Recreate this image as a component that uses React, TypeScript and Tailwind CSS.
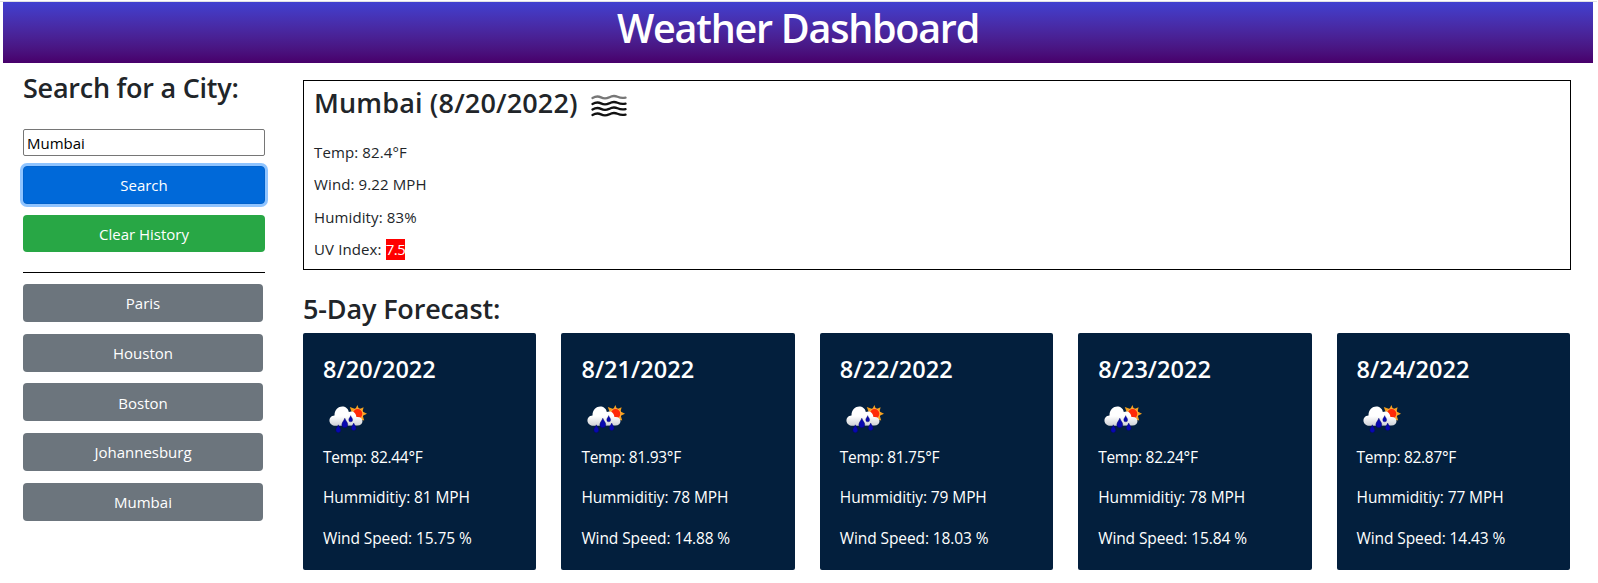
import React from "react";

const history = ["Paris", "Houston", "Boston", "Johannesburg", "Mumbai"];

const forecast = [
  { date: "8/20/2022", temp: "82.44", humidity: "81", wind: "15.75" },
  { date: "8/21/2022", temp: "81.93", humidity: "78", wind: "14.88" },
  { date: "8/22/2022", temp: "81.75", humidity: "79", wind: "18.03" },
  { date: "8/23/2022", temp: "82.24", humidity: "78", wind: "15.84" },
  { date: "8/24/2022", temp: "82.87", humidity: "77", wind: "14.43" },
];

function MistIcon() {
  const wave = "q4.5 -2.6 8.5 -0.6 t8 0 q4.5 -2.4 8.5 -0.6 t8 0.8";
  return (
    <svg className="ml-[13px] mt-[13px] h-[24px] w-[36px] shrink-0" viewBox="0 0 36 24" fill="none" strokeWidth="2.3" strokeLinecap="round">
      <path d={"M1.5 4" + wave} stroke="#777" />
      <path d={"M1.5 10" + wave} stroke="#111" />
      <path d={"M1.5 15.5" + wave} stroke="#111" />
      <path d={"M1.5 21" + wave} stroke="#111" />
    </svg>
  );
}

function Drop({ x, y, s }: { x: number; y: number; s: number }) {
  return (
    <path
      transform={`translate(${x} ${y}) scale(${s})`}
      d="M0 0 C0.8 2.6 3 4 3 6.6 A3 3 0 0 1 -3 6.6 C-3 4 -0.8 2.6 0 0 Z"
      fill="#0808b0"
      stroke="#050568"
      strokeWidth="0.5"
    />
  );
}

function RainIcon({ id }: { id: string }) {
  return (
    <svg className="block h-[50px] w-[50px]" viewBox="0 0 50 50">
      <defs>
        <linearGradient id={id} x1="0" y1="0" x2="0" y2="1">
          <stop offset="0.5" stopColor="#ffffff" />
          <stop offset="1" stopColor="#cfd1d6" />
        </linearGradient>
      </defs>
      <path
        d="M34.4 9 L36 13.2 L40.6 11.2 L39.6 15.4 L44 17.8 L39.8 19.7 L41.2 24.6 L36.5 23.5 L34.4 26 L30 23 L26 20 L29 17 L26.8 11 L32.4 13 Z"
        fill="#f5a01c"
      />
      <circle cx="34.6" cy="17.8" r="5.3" fill="#ff2a08" stroke="#ffab3a" strokeWidth="1.1" />
      <path
        d="M13.5 29.8 C4.5 30.3 4.6 19.6 11.5 19.5 C11.5 8.5 24.5 8 25.8 16 C29.5 14.4 33 16.5 33.4 21 C41.5 20 41.2 29.6 34.5 29.6 Z"
        fill={`url(#${id})`}
      />
      <Drop x={27.7} y={19.6} s={0.65} />
      <Drop x={21.8} y={22.3} s={0.98} />
      <Drop x={15.3} y={28.8} s={0.82} />
      <Drop x={30.7} y={27} s={0.78} />
    </svg>
  );
}

export default function App() {
  return (
    <div className="h-[583px] w-full overflow-hidden bg-white pt-px font-['Open_Sans','Noto_Sans',sans-serif] text-[15px] text-[#212529]">
      <div className="mr-[1px] h-px bg-[#dfe0e4]" />
      <header className="ml-[3px] mr-[5px] h-[61px] bg-linear-to-b from-[#4040d0] to-[#48006b] text-center text-white">
        <h1 className="text-[39.5px] font-semibold leading-[52px] tracking-[-1.25px]">Weather Dashboard</h1>
      </header>

      <div className="flex items-start pl-[23px] pr-[27px]">
        <aside className="w-[242px] shrink-0 pt-[8px]">
          <h3 className="text-[27px] font-semibold leading-[34px] tracking-[-0.25px]">Search for a City:</h3>
          <input
            className="mt-[24px] block h-[27px] w-full rounded-[2px] border border-[#767676] px-[3px] text-black outline-none"
            defaultValue="Mumbai"
          />
          <button className="mt-[10px] block h-[38px] w-full rounded-[4px] border border-[#0062cc] bg-[#0069d9] text-white shadow-[0_0_0_3px_#8fc4ff]">
            Search
          </button>
          <button className="mt-[11px] block h-[37px] w-full rounded-[4px] bg-[#28a745] pt-px text-white">Clear History</button>
          <hr className="mt-[20px] border-t border-black" />
          <div className="mt-[11px] flex w-[240px] flex-col gap-[11.7px]">
            {history.map((city) => (
              <button key={city} className="h-[38px] rounded-[4px] bg-[#6c757d] pt-px text-white">
                {city}
              </button>
            ))}
          </div>
        </aside>

        <main className="ml-[38px] min-w-0 flex-1 pt-[17px]">
          <section className="h-[190px] border border-black pl-[10px]">
            <div className="flex h-[45px] items-start">
              <h2 className="text-[27px] font-semibold leading-[44px] tracking-[0.15px]">Mumbai (8/20/2022)</h2>
              <MistIcon />
            </div>
            <div className="mt-[10px] flex flex-col leading-[32.3px] tracking-[0.12px] text-[#212529]">
              <p>Temp: 82.4°F</p>
              <p>Wind: 9.22 MPH</p>
              <p>Humidity: 83%</p>
              <p className="flex items-start whitespace-pre">
                UV Index: <span className="mt-[6px] h-[21px] bg-[#ff0000] leading-[21px] tracking-[-0.5px] text-white">7.5</span>
              </p>
            </div>
          </section>

          <h3 className="mt-[22px] text-[27px] font-semibold leading-[34px] tracking-[-0.15px]">5-Day Forecast:</h3>
          <div className="mr-px mt-[7px] grid grid-cols-5 gap-[25px]">
            {forecast.map((day, i) => (
              <article key={day.date} className="h-[237px] rounded-[2px] bg-[#031f3d] pl-[20px] pt-[20px] text-[15.5px] tracking-[-0.1px] text-white">
                <h4 className="text-[23.5px] font-semibold leading-[33px] tracking-[0.05px]">{day.date}</h4>
                <div className="mt-[10px]">
                  <RainIcon id={`cloud-${i}`} />
                </div>
                <p className="leading-[22px] tracking-[-0.3px]">Temp: {day.temp}°F</p>
                <p className="mt-[18px] leading-[22px]">Hummiditiy: {day.humidity} MPH</p>
                <p className="mt-[19px] leading-[22px]">Wind Speed: {day.wind} %</p>
              </article>
            ))}
          </div>
        </main>
      </div>
    </div>
  );
}
